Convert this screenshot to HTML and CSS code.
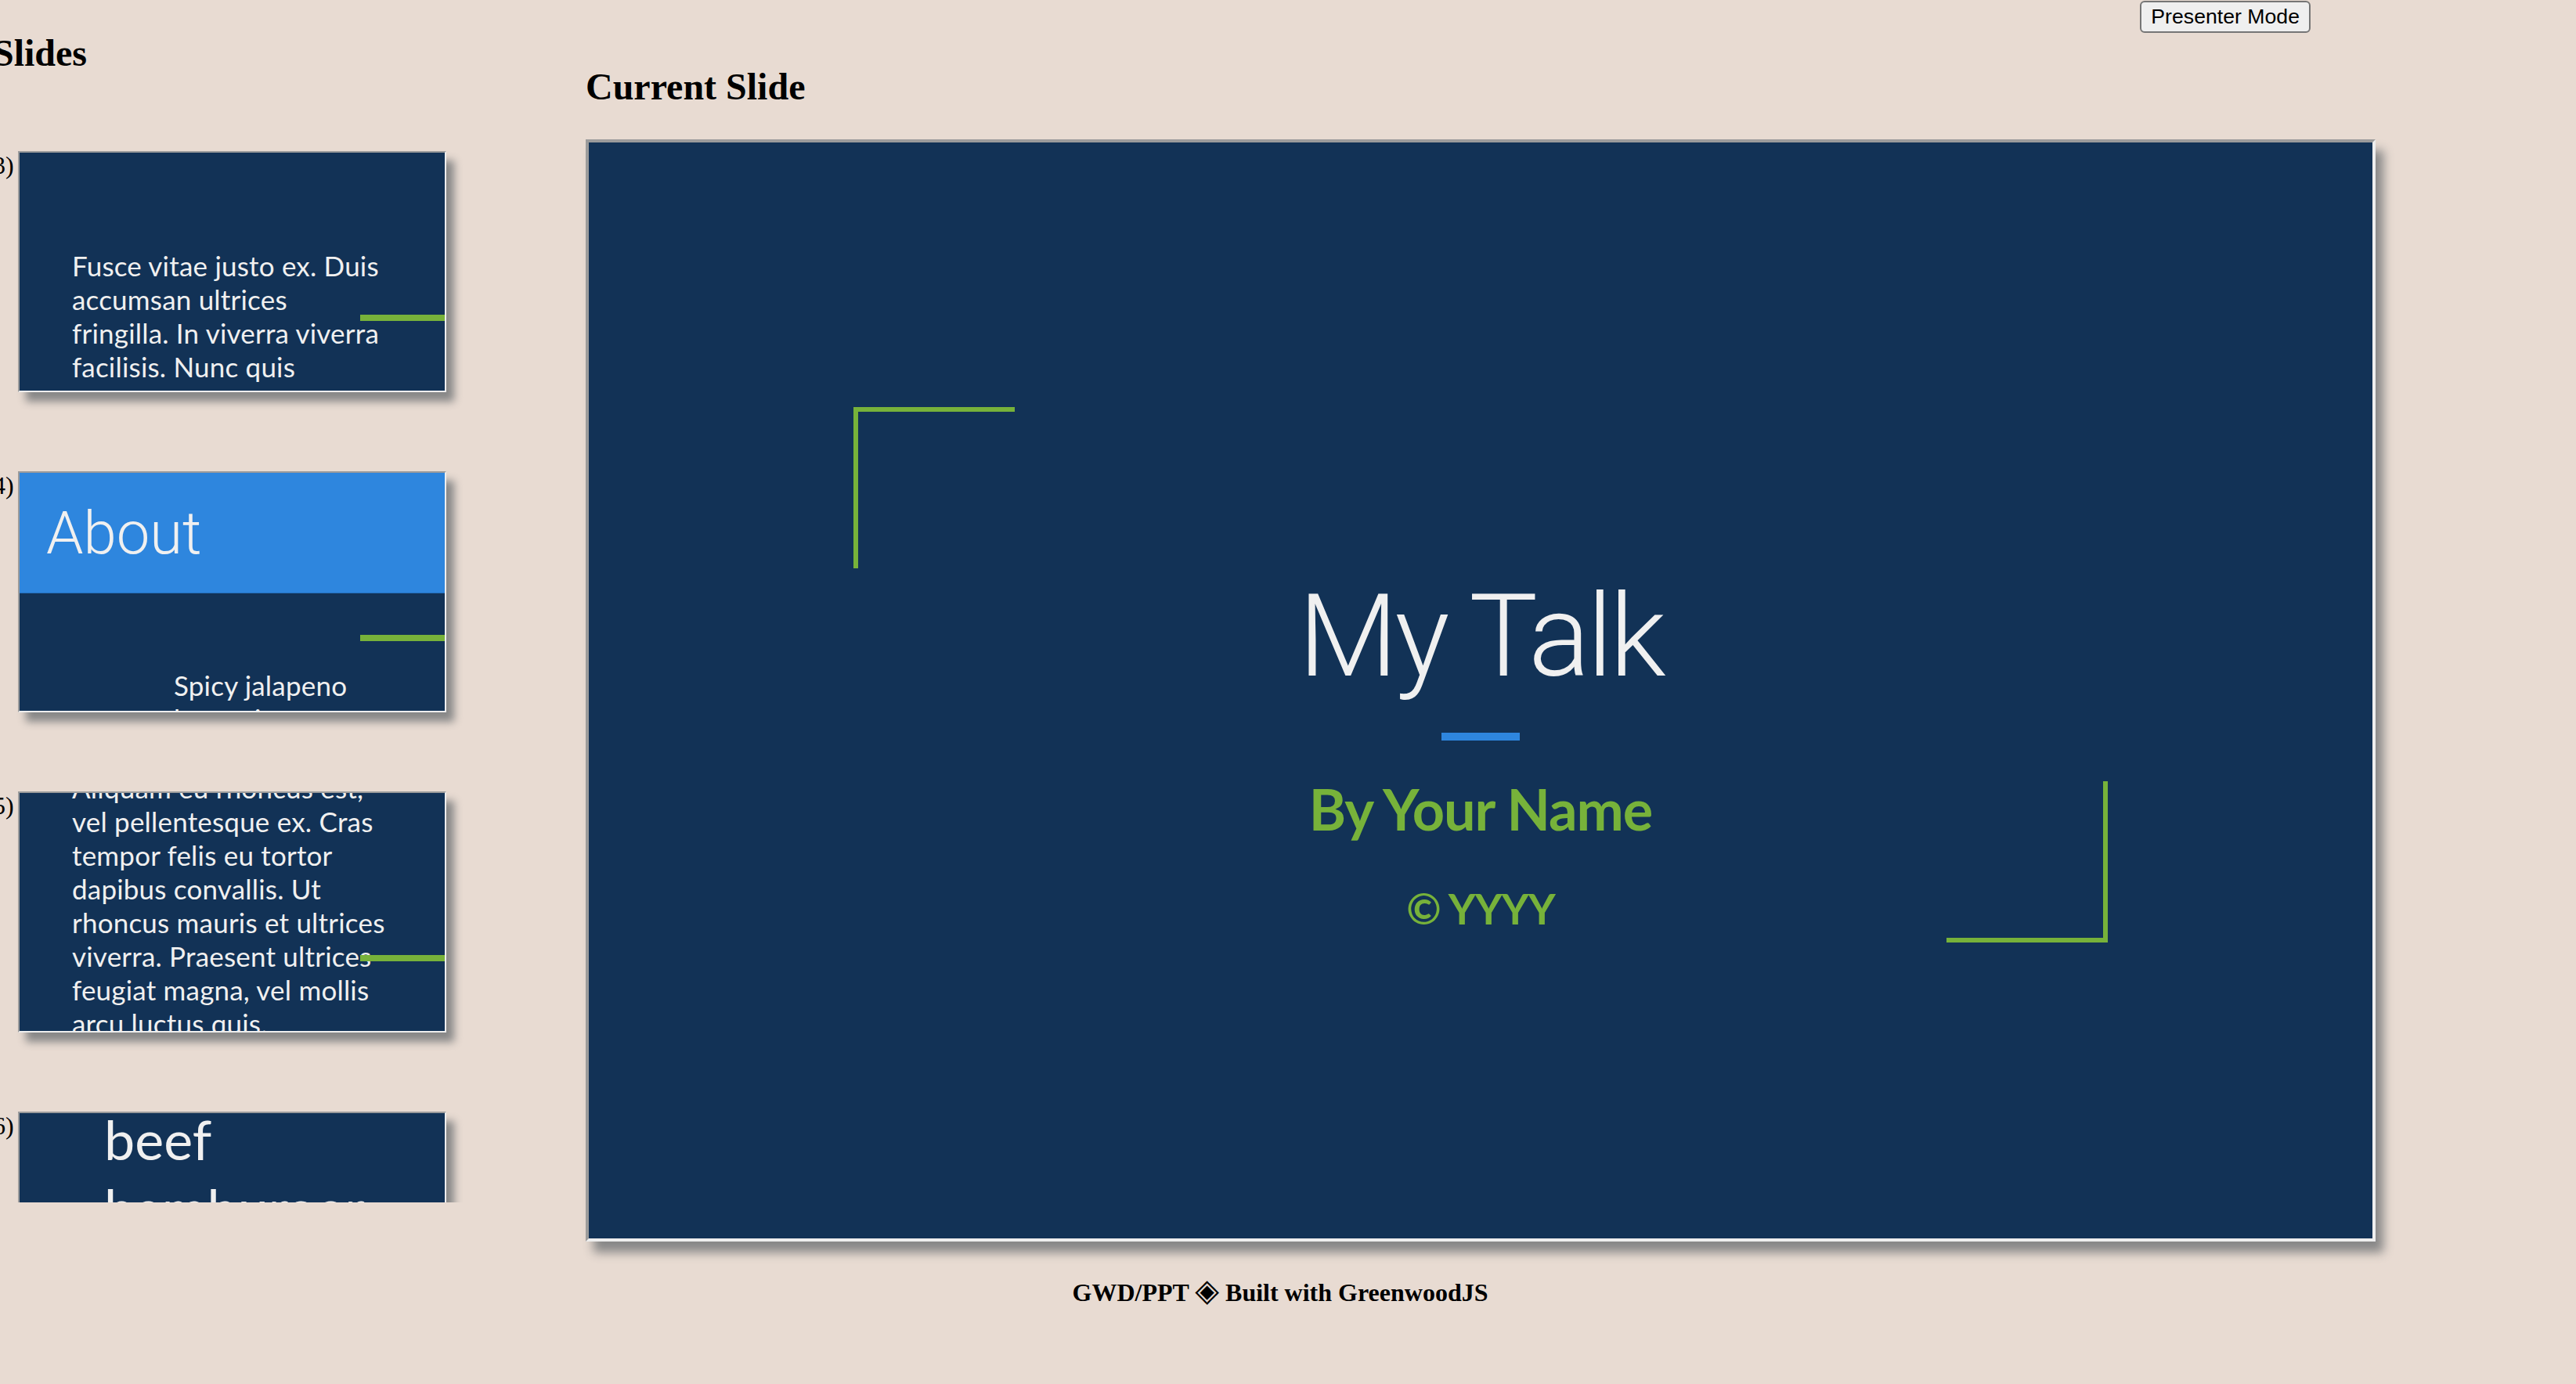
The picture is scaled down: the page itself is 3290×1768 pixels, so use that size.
FILE: index.html
```html
<!DOCTYPE html>
<html lang="en">
<head>
<meta charset="utf-8">
<title>GWD/PPT</title>
<link rel="stylesheet" href="styles.css">
</head>
<body>
<div class="layout">
  <aside class="sidebar">
    <h2 class="heading">Slides</h2>
    <ol class="thumbs">
      <li class="thumb-item">
        <span class="num">3)</span>
        <div class="thumb">
          <p class="thumb-text t3">Fusce vitae justo ex. Duis<br>accumsan ultrices<br>fringilla. In viverra viverra<br>facilisis. Nunc quis<br>porttitor lorem.</p>
          <span class="thumb-accent"></span>
        </div>
      </li>
      <li class="thumb-item">
        <span class="num">4)</span>
        <div class="thumb">
          <div class="thumb-header">About</div>
          <p class="thumb-text t4">Spicy jalapeno<br>bacon ipsum</p>
          <span class="thumb-accent"></span>
        </div>
      </li>
      <li class="thumb-item">
        <span class="num">5)</span>
        <div class="thumb">
          <p class="thumb-text t5">Aliquam eu rhoncus est,<br>vel pellentesque ex. Cras<br>tempor felis eu tortor<br>dapibus convallis. Ut<br>rhoncus mauris et ultrices<br>viverra. Praesent ultrices<br>feugiat magna, vel mollis<br>arcu luctus quis.</p>
          <span class="thumb-accent"></span>
        </div>
      </li>
      <li class="thumb-item">
        <span class="num">6)</span>
        <div class="thumb">
          <p class="thumb-big">beef<br>hamburger</p>
          <span class="thumb-accent"></span>
        </div>
      </li>
    </ol>
  </aside>
  <main class="main">
    <div class="toolbar">
      <button class="presenter-btn" type="button">Presenter Mode</button>
    </div>
    <h2 class="heading main-heading">Current Slide</h2>
    <section class="slide">
      <span class="corner corner-tl"></span>
      <span class="corner corner-br"></span>
      <h1 class="slide-title">My Talk</h1>
      <div class="slide-rule"></div>
      <h2 class="slide-author">By Your Name</h2>
      <p class="slide-copy">© YYYY</p>
    </section>
  </main>
</div>
<footer class="footer">GWD/PPT <span class="diamond">◈</span> Built with GreenwoodJS</footer>
</body>
</html>
```
FILE: styles.css
```css
html, body {
  margin: 0;
  padding: 0;
}
body {
  background: #e8dbd2;
  font-family: "Liberation Serif", "Times New Roman", serif;
  color: #000;
  width: 3290px;
  height: 1768px;
  overflow: hidden;
}
.layout {
  display: grid;
  grid-template-columns: 757px 2286px;
  align-items: start;
  margin-left: -9px;
}
.sidebar {
  height: 1536px;
  overflow: hidden;
}
.heading {
  font-size: 48px;
  line-height: 55px;
  font-weight: bold;
  margin: 40px 0 0;
}
.thumbs {
  list-style: none;
  margin: 98px 0 0;
  padding: 0;
  display: flex;
  flex-direction: column;
  gap: 101px;
}
.thumb-item {
  display: flex;
  align-items: flex-start;
  gap: 5px;
}
.num {
  width: 27px;
  flex: none;
  font-size: 32px;
  line-height: 37px;
  white-space: nowrap;
}
.thumb {
  position: relative;
  flex: none;
  width: 547px;
  height: 308px;
  box-sizing: border-box;
  border: 2px solid;
  border-color: #9b9b9b #eeeeee #eeeeee #9b9b9b;
  background: #123256;
  overflow: hidden;
  box-shadow: 10px 12px 10px #888888;
  color: #f0f0f0;
  font-family: Lato, "Open Sans", sans-serif;
}
.thumb-accent {
  position: absolute;
  right: 0;
  top: 207px;
  width: 108px;
  height: 8px;
  background: #77b23a;
}
.thumb-text {
  margin: 0;
  padding-left: 67px;
  font-size: 35px;
  line-height: 43px;
  letter-spacing: 0.2px;
  white-space: nowrap;
}
.t3 {
  padding-top: 123px;
}
.thumb-header {
  height: 154px;
  box-sizing: border-box;
  padding: 39px 0 0 34px;
  background: #2e86de;
  border-bottom: 1px solid #2570bd;
  font-family: Roboto, "Liberation Sans", sans-serif;
  font-weight: 300;
  font-size: 76px;
  line-height: 1;
}
.t4 {
  padding-left: 197px;
  margin-top: 96px;
}
.t5 {
  margin-top: -28px;
}
.thumb-big {
  margin: -11px 0 0;
  padding-left: 108px;
  font-size: 70px;
  line-height: 88px;
  white-space: nowrap;
}
.main {
  display: flex;
  flex-direction: column;
}
.toolbar {
  height: 42px;
  display: flex;
  justify-content: flex-end;
  padding-right: 83px;
}
.presenter-btn {
  margin-top: 1px;
  height: 41px;
  padding: 0 12px;
  font-family: "Liberation Sans", Arial, sans-serif;
  font-size: 26.67px;
  color: #000;
  background: #efefef;
  border: 2px solid #767676;
  border-radius: 6px;
}
.main-heading {
  margin: 41px 0 40px;
}
.slide {
  position: relative;
  width: 2286px;
  height: 1408px;
  box-sizing: border-box;
  border: 4px solid;
  border-color: #9b9b9b #eeeeee #eeeeee #9b9b9b;
  background: #123256;
  box-shadow: 10px 14px 12px #888888;
  display: flex;
  flex-direction: column;
  align-items: center;
  padding-top: 558px;
  overflow: hidden;
}
.corner {
  position: absolute;
  width: 206px;
  height: 206px;
  box-sizing: border-box;
}
.corner-tl {
  left: 338px;
  top: 338px;
  border-top: 6px solid #77b23a;
  border-left: 6px solid #77b23a;
}
.corner-br {
  right: 338px;
  bottom: 378px;
  border-right: 6px solid #77b23a;
  border-bottom: 6px solid #77b23a;
}
.slide-title {
  margin: 0;
  font-family: Roboto, "Liberation Sans", sans-serif;
  font-weight: 300;
  font-size: 147px;
  line-height: 1;
  letter-spacing: -4px;
  color: #f0f0f0;
}
.slide-rule {
  width: 100px;
  height: 10px;
  margin-top: 49px;
  background: #2e86de;
}
.slide-author {
  margin: 51px 0 0;
  font-family: Lato, "Open Sans", sans-serif;
  font-weight: 700;
  font-size: 72px;
  line-height: 1;
  letter-spacing: -1px;
  color: #77b23a;
}
.slide-copy {
  margin: 65px 0 0;
  font-family: Lato, "Open Sans", sans-serif;
  font-weight: 700;
  font-size: 54px;
  line-height: 1;
  letter-spacing: -1px;
  color: #77b23a;
}
.footer {
  margin-top: 47px;
  padding-right: 20px;
  text-align: center;
  font-family: "Liberation Serif", "Times New Roman", serif;
  font-weight: bold;
  font-size: 32px;
  line-height: 37px;
}
.diamond {
  font-family: "DejaVu Sans", sans-serif;
  font-weight: normal;
  font-size: 40px;
  line-height: 0;
}
```
